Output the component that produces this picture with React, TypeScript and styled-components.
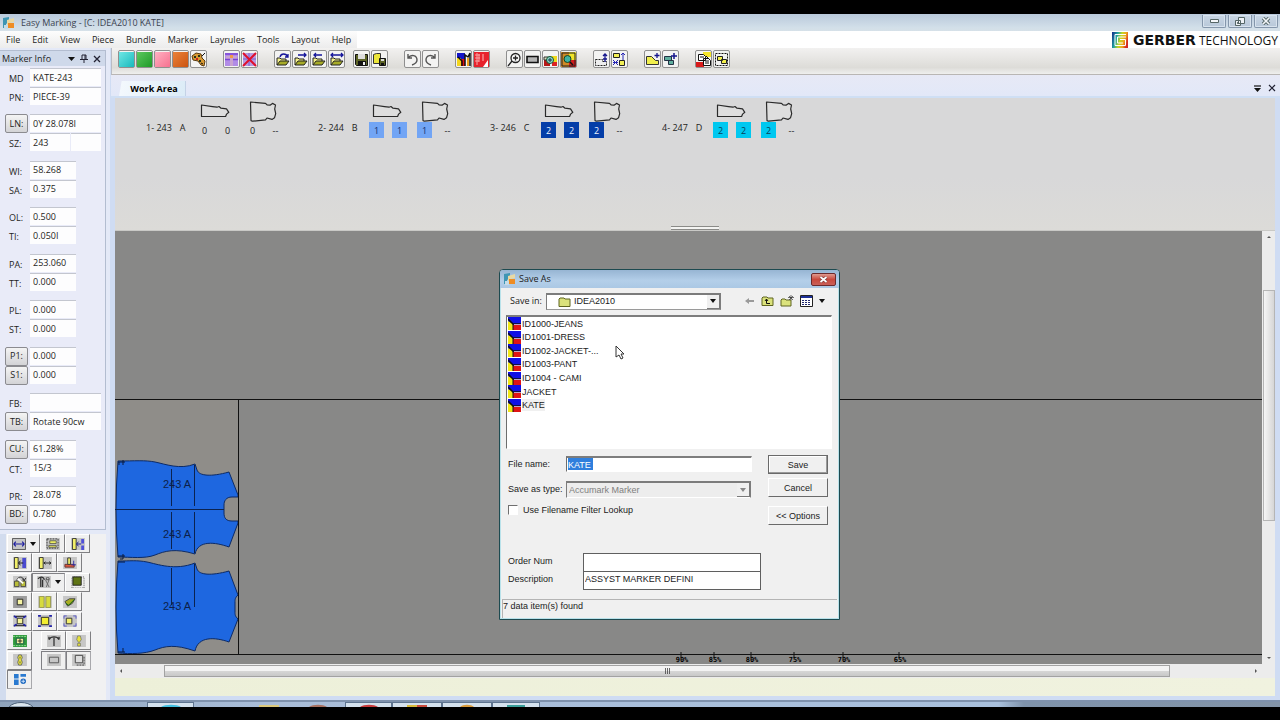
import React from "react";
import styled, { createGlobalStyle, css } from "styled-components";

const UI = '"Open Sans", "Noto Sans", sans-serif';
const CLASSIC = '"Liberation Sans", Arial, sans-serif';

const Global = createGlobalStyle`
  *, *::before, *::after { box-sizing: border-box; }
  body { margin: 0; background: #000; font: 9px/12px ${UI}; color: #1e1e22; overflow: hidden; }
  button, input, select { font: inherit; color: inherit; margin: 0; padding: 0; border-radius: 0; outline: none; }
  svg { display: block; flex: none; }
`;

/* ---------- window frame ---------- */

const Screen = styled.div`
  min-height: 100vh;
  padding: 14px 0 13px;
  display: flex;
  flex-direction: column;
  background: #000;
`;
const TitleBar = styled.header`
  height: 17px;
  display: flex;
  align-items: center;
  gap: 6px;
  padding-left: 3px;
  background: linear-gradient(#b9c9db, #d2dfe9 80%, #d6e1e8);
`;
const Title = styled.h1`
  margin: 0;
  flex: 1;
  font-size: 9px;
  font-weight: 400;
  color: #3b4350;
`;
const WindowButtons = styled.div`
  align-self: flex-start;
  display: flex;
  gap: 2px;
  padding: 1px 2px 0 0;
`;
const WindowButton = styled.button`
  width: 24px;
  height: 13px;
  display: grid;
  place-items: center;
  border: 1px solid #8496ab;
  border-top: 0;
  border-radius: 0 0 2px 2px;
  background: linear-gradient(#c9d6e4, #b8c8d9);
  box-shadow: inset 0 0 0 1px #d8e3ee;
`;
const MenuRow = styled.div`
  height: 17px;
  display: flex;
  justify-content: space-between;
  background: #fff;
`;
const Menu = styled.nav`
  display: flex;
  gap: 12px;
  padding: 0 6px;
  background: linear-gradient(#fdfdfd, #ececec);
`;
const MenuItem = styled.button`
  border: 0;
  background: none;
  line-height: 16px;
`;
const Brand = styled.div`
  display: flex;
  align-items: center;
  gap: 5px;
  padding: 1px 2px 0 0;
  font-size: 12px;
  line-height: 16px;
  color: #111;
`;
const BrandName = styled.strong`
  font: 700 14px/16px "DejaVu Sans", sans-serif;
`;
const Body = styled.div`
  flex: 1;
  display: flex;
  align-items: stretch;
  background: #cfdcf3;
`;

/* ---------- marker info ---------- */

const Sidebar = styled.aside`
  width: 110px;
  flex: none;
  display: flex;
  flex-direction: column;
  background: #e4e9f7;
`;
const InfoPanel = styled.section`
  width: 106px;
  margin-top: 2px;
  padding-bottom: 5px;
  border: solid #b3bdd0;
  border-width: 1px 1px 1px 0;
  background: #e9ebf8;
`;
const InfoHeader = styled.div`
  height: 15px;
  display: flex;
  align-items: center;
  justify-content: space-between;
  padding: 0 4px 0 2px;
  background: #cfd9ea;
`;
const InfoTitle = styled.h2`
  margin: 0;
  font-size: 9px;
  font-weight: 400;
`;
const InfoActions = styled.div`
  display: flex;
  align-items: center;
  gap: 5px;
`;
const IconButton = styled.button`
  display: grid;
  place-items: center;
  border: 0;
  background: none;
`;
const Fields = styled.div`
  height: 456px;
  margin-top: 2px;
  padding: 0 4px 0 5px;
  display: flex;
  flex-direction: column;
  justify-content: space-between;
`;
const FieldPair = styled.div`
  display: flex;
  flex-direction: column;
`;
const FieldRow = styled.div`
  height: 19px;
  display: flex;
  gap: 2px;
`;
const FieldLabel = styled.label`
  width: 23px;
  padding: 4px 0 0 4px;
  line-height: 14px;
`;
const FieldButton = styled.button`
  width: 23px;
  border: 1px solid #8b8b90;
  border-radius: 2px;
  background: linear-gradient(#f4f4f4, #d3d3d6);
  line-height: 16px;
`;
const FieldInput = styled.input<{ $w: number }>`
  width: ${(p) => p.$w}px;
  height: 18px;
  border: 0;
  border-top: 1px solid #c3c6cf;
  background: #fdfdfe;
  padding: 0 3px 1px;
  & + & { margin-left: -1px; }
`;

/* ---------- tool box ---------- */

const ToolBox = styled.div`
  flex: 1;
  width: 106px;
  margin-top: 4px;
  padding: 0 0 10px 1px;
  border-left: 6px solid #d2dcee;
  background: #f1f1f2;
`;
const ToolRows = styled.div`
  height: 155px;
  display: flex;
  flex-direction: column;
  justify-content: space-between;
`;
const ToolRow = styled.div`
  display: flex;
`;
const ToolKey = styled.button<{ $wide?: boolean; $pushed?: boolean; $offset?: boolean }>`
  width: ${(p) => (p.$wide ? 33 : 25)}px;
  height: 19px;
  margin-left: ${(p) => (p.$offset ? 9 : 0)}px;
  display: flex;
  align-items: center;
  justify-content: center;
  gap: 4px;
  border: 1px solid;
  border-color: ${(p) => (p.$pushed ? "#808084 #a8a8ac #a8a8ac #808084" : "#fff #7f7f82 #7f7f82 #fff")};
  background: #f0f0f0;
`;

/* ---------- main column ---------- */

const Main = styled.main`
  flex: 1;
  min-width: 0;
  display: flex;
  flex-direction: column;
  padding-left: 1px;
`;
const Toolbar = styled.div`
  height: 27px;
  display: flex;
  gap: 16px;
  padding: 2px 0 0 6px;
  border-bottom: 1px solid #b9b6b4;
  border-left: 1px solid #b9bcc4;
  background: linear-gradient(#f2f1f0, #dddcd8 75%, #efefee);
`;
const ToolSet = styled.div<{ $gap?: number }>`
  display: flex;
  align-items: flex-start;
  gap: ${(p) => p.$gap ?? 1}px;
`;
const ToolButton = styled.button`
  width: 17px;
  height: 18px;
  display: grid;
  place-items: center;
  border: 1px solid #8f8f8f;
  border-radius: 2px;
  background: #f3f3f2;
`;
const TabStrip = styled.div`
  height: 23px;
  display: flex;
  align-items: flex-end;
  justify-content: space-between;
  padding-right: 4px;
  border-bottom: 2px solid #cfdff4;
  background: linear-gradient(#e7e9f6, #e2e8f8);
`;
const Tab = styled.button`
  width: 75px;
  height: 15px;
  border: 0;
  border-right: 1px solid #c4d2e6;
  background: linear-gradient(100deg, transparent 10px, #f3f8fd 11px, #dcecf7);
  padding: 0 0 0 12px;
  font-weight: 700;
  line-height: 15px;
  color: #000;
`;
const TabActions = styled.div`
  display: flex;
  gap: 7px;
  padding-bottom: 4px;
`;
const Workspace = styled.div`
  flex: 1;
  display: flex;
  flex-direction: column;
  margin: 0 5px 4px 4px;
`;
const IconTray = styled.section`
  height: 133px;
  display: flex;
  flex-direction: column;
  justify-content: space-between;
  align-items: center;
  background: linear-gradient(#d8d8d9 60%, #dcdbd8);
  border-bottom: 1px solid #c9c9c6;
`;
const SizeList = styled.div`
  align-self: stretch;
  display: flex;
  padding: 3px 0 0 31px;
`;
const SizeGroup = styled.div`
  width: 172px;
  display: flex;
`;
const SizeName = styled.div`
  width: 51px;
  display: flex;
  gap: 8px;
  padding-top: 21px;
`;
const PieceColumn = styled.div<{ $w: number }>`
  width: ${(p) => p.$w}px;
`;
const PieceThumb = styled.div`
  height: 21px;
  padding-left: 3px;
`;
const CountRow = styled.div`
  display: flex;
  gap: 8px;
`;
const Count = styled.span<{ $bg: string; $fg: string }>`
  width: 15px;
  height: 16px;
  text-align: center;
  line-height: 18px;
  background: ${(p) => p.$bg};
  color: ${(p) => p.$fg};
`;
const SplitGrip = styled.div`
  width: 48px;
  height: 4px;
  border: solid #8b8b88;
  border-width: 1px 0;
  background: #f4f4f2;
`;
const CanvasRow = styled.div`
  flex: 1;
  display: flex;
`;
const Canvas = styled.section`
  position: relative;
  flex: 1;
  min-width: 0;
  background: #888887;
`;
const MarkerDrawing = styled.svg`
  position: absolute;
  inset: 0;
  width: 100%;
  height: 100%;
`;
const VScroll = styled.div`
  width: 13px;
  display: flex;
  flex-direction: column;
  align-items: center;
  padding: 4px 0;
  background: #ececec;
`;
const VThumb = styled.div`
  width: 12px;
  flex: 230;
  margin-top: 51px;
  border: 1px solid #b5b5b5;
  background: linear-gradient(90deg, #f5f5f5, #d6d6d6);
`;
const Stretch = styled.div<{ $grow: number }>`
  flex: ${(p) => p.$grow} 0 0;
`;
const HScroll = styled.div`
  height: 14px;
  display: flex;
  align-items: center;
  padding: 0 17px 0 4px;
  background: #ececec;
`;
const HThumb = styled.div`
  height: 12px;
  flex: 1004 0 0;
  margin-left: 41px;
  display: grid;
  place-items: center;
  border: 1px solid #a2a2a2;
  background: linear-gradient(#f3f3f3 45%, #d5d5d5 55%, #c8c8c8);
`;
const MessageBar = styled.div`
  height: 18px;
  background: linear-gradient(90deg, #edf0d9, #f0f2df);
`;
const TaskBar = styled.footer`
  height: 7px;
  display: flex;
  align-items: flex-end;
  border-top: 2px solid #7f92ad;
  background: linear-gradient(90deg, #8fa3bb, #a9bdd8 20%, #a9c0dc 78%, #7f93ab 80%, #8394a8);
`;
const TaskGap = styled.div<{ $w: number }>`
  width: ${(p) => p.$w}px;
`;
const TaskButton = styled.button<{ $w: number; $lit?: boolean }>`
  width: ${(p) => p.$w}px;
  height: 5px;
  display: grid;
  place-items: end center;
  border: 1px solid #5f7590;
  border-width: ${(p) => (p.$lit ? "1px 1px 0" : "0")};
  background: ${(p) => (p.$lit ? "#d5e2ee" : "transparent")};
`;

/* ---------- save dialog ---------- */

const Dialog = styled.div`
  position: absolute;
  left: 384px;
  top: 38px;
  width: 341px;
  border: 1px solid #1d4a50;
  border-radius: 4px 4px 0 0;
  box-shadow: inset 0 0 0 1px #b9e2ea;
  background: #f0f0f0;
  font: 9px/12px ${CLASSIC};
  color: #1b1b1b;
`;
const DialogTitle = styled.div`
  height: 18px;
  display: flex;
  align-items: center;
  gap: 3px;
  padding: 0 3px 0 4px;
  border-radius: 3px 3px 0 0;
  background: linear-gradient(#97b5d3, #b4cfe9 60%, #abc8e4);
  font: 9px/12px ${UI};
`;
const DialogHeading = styled.h2`
  margin: 0;
  flex: 1;
  font-size: 9px;
  font-weight: 400;
`;
const CloseButton = styled.button`
  width: 25px;
  height: 13px;
  display: grid;
  place-items: center;
  border: 1px solid #6d2a2c;
  border-radius: 2px;
  background: linear-gradient(#e09a8f, #c9483c 50%, #c96058);
`;
const DialogBody = styled.div`
  padding: 4px 7px 0 7px;
`;
const LookRow = styled.div`
  height: 18px;
  display: flex;
  align-items: center;
  padding-left: 3px;
`;
const LookLabel = styled.label`
  width: 36px;
  font: 9px/12px ${UI};
`;
const ComboShell = styled.div<{ $w: number; $off?: boolean }>`
  position: relative;
  width: ${(p) => p.$w}px;
  height: 17px;
  border: 1px solid #7c7c7c;
  border-top-width: 2px;
  border-bottom-color: ${(p) => (p.$off ? "#fff" : "#9a9a9a")};
  background: ${(p) => (p.$off ? "#ededed" : "#fff")};
  color: ${(p) => (p.$off ? "#808080" : "#1b1b1b")};
`;
const Combo = styled.select<{ $inset: number }>`
  appearance: none;
  width: 100%;
  height: 100%;
  display: block;
  padding: 0 14px 1px ${(p) => p.$inset}px;
  border: 0;
  background: none;
  opacity: 1;
  color: inherit;
`;
const ComboIcon = styled.span`
  position: absolute;
  left: 11px;
  top: 1px;
`;
const ComboArrow = styled.span`
  position: absolute;
  right: 0;
  top: 0;
  bottom: 0;
  width: 13px;
  display: grid;
  place-items: center;
  border: solid #7a7a7a;
  border-width: 0 1px 1px 0;
  background: #f0f0f0;
  pointer-events: none;
`;
const LookTools = styled.div`
  display: flex;
  align-items: center;
  gap: 6px;
  margin-left: 23px;
`;
const FileList = styled.ul`
  height: 134px;
  margin: 5px 0 0 -1px;
  padding: 0 0 0 1px;
  list-style: none;
  border: 1px solid #fff;
  border-top: 2px solid #7d7d7d;
  border-left-color: #6d6d6d;
  background: #fff;
  display: grid;
  grid-template-rows: repeat(7, 1fr) 36px;
`;
const FileItem = styled.li`
  display: flex;
  align-items: center;
  gap: 1px;
`;
const FileName = styled.span<{ $marked?: boolean }>`
  background: ${(p) => (p.$marked ? "#f0f0f0" : "transparent")};
`;
const Form = styled.div`
  display: flex;
  justify-content: space-between;
  padding: 7px 4px 0 1px;
`;
const FormFields = styled.div``;
const FormRow = styled.div<{ $h: number }>`
  height: ${(p) => p.$h}px;
  display: flex;
  align-items: flex-start;
`;
const FormLabel = styled.label<{ $w: number }>`
  width: ${(p) => p.$w}px;
  padding-top: 2px;
  white-space: nowrap;
`;
const NameInput = styled.input`
  width: 186px;
  height: 16px;
  padding: 0 1px;
  border: 1px solid #fff;
  border-top: 2px solid #7d7d7d;
  border-left-color: #6d6d6d;
  color: #fff;
  background: linear-gradient(#2f7fdd, #2f7fdd) 1px 0 / 25px 12px no-repeat #fff;
`;
const PlainBox = styled.input`
  width: 178px;
  height: 19px;
  padding: 0 1px 4px;
  border: 1px solid #5f5f5f;
  background: #fff;
`;
const Tick = styled.input`
  appearance: none;
  width: 10px;
  height: 10px;
  border: 1px solid #fff;
  border-top-color: #6f6f6f;
  border-left-color: #6f6f6f;
  background: #fff;
`;
const TickLabel = styled.label`
  padding-left: 5px;
  line-height: 11px;
`;
const FormButtons = styled.div`
  display: flex;
  flex-direction: column;
  margin-top: -1px;
`;
const PushButton = styled.button<{ $main?: boolean; $gap: number }>`
  width: 60px;
  height: 19px;
  margin-bottom: ${(p) => p.$gap}px;
  border: 1px solid;
  border-color: #fff #6a6a6a #6a6a6a #fff;
  background: #f0f0f0;
  ${(p) => p.$main && css`border-color: #6a6a6a; box-shadow: inset -1px -1px #9a9a9a, inset 1px 1px #fff;`}
`;
const Extra = styled.div`
  padding: 28px 0 0 1px;
`;
const DialogStatus = styled.div`
  height: 19px;
  margin: 9px 2px 1px;
  border: solid #b4b4b4;
  border-width: 1px 0 0 1px;
`;
const Pointer = styled.svg`
  position: absolute;
  left: 500px;
  top: 114px;
`;

/* ---------- drawings ---------- */

const Caret = ({ w = 7, c = "#111" }: { w?: number; c?: string }) => (
  <svg width={w} height={4} viewBox="0 0 8 4" preserveAspectRatio="none"><path d="M0 0h8L4 4z" fill={c} /></svg>
);
const AppLogo = ({ s }: { s: number }) => (
  <svg width={s} height={s} viewBox="0 0 12 12">
    <path d="M0 1l6-1v5L3 7v4H0z" fill="#3f96b4" />
    <path d="M4 3l7-2v4L7 6v5H4z" fill="#e9d9a4" />
    <path d="M5 6h6v5H5z" fill="#ef8d24" />
    <path d="M1 8h4v4H1z" fill="#c5dce8" />
  </svg>
);
const Folder = ({ children }: { children?: React.ReactNode }) => (
  <svg width={13} height={12} viewBox="0 0 13 12">
    <path d="M1 10.500V3l1-1h4l1 1h5v7.500z" fill="#dbe27c" stroke="#5f6420" />
    {children}
  </svg>
);
const DataIcon = () => (
  <svg width={13} height={13} viewBox="0 0 13 13">
    <path d="M0 0h13v13H0z" fill="#1010e6" />
    <path d="M0 4l5 3v6H0z" fill="#f2e816" />
    <path d="M5 8h8v5H5z" fill="#e01414" />
    <path d="M0 2l5 5h8" stroke="#111" strokeWidth="1.500" fill="none" />
    <path d="M5 7v6" stroke="#111" fill="none" />
    <path d="M6 7.500h7" stroke="#e8c8e8" strokeWidth=".8" />
  </svg>
);

const Open = ({ arrow }: { arrow: string }) => (
  <>
    <path d="M2 13V6h3l1 1h5v2" fill="#f4f08a" stroke="#222" />
    <path d="M2 13l3-4h9l-3 4z" fill="#a7ab27" stroke="#222" />
    <path d={arrow} fill="none" stroke="#15159a" strokeWidth="1.3" />
  </>
);
const Floppy = () => (
  <>
    <path d="M1.500 2.500h12v11h-11l-1-1z" fill="#5d6427" stroke="#111" />
    <path d="M4 2h7v5H4z" fill="#ddd" />
    <path d="M4 9h8v5H4z" fill="#111" />
    <path d="M9 10h2v3H9z" fill="#eee" />
  </>
);

const Swatch = ({ from, to }: { from: string; to: string }) => (
  <>
    <defs>
      <linearGradient id={"sw" + to.slice(1)} x1="0" y1="0" x2="1" y2="1">
        <stop offset="0" stopColor={from} /><stop offset="1" stopColor={to} />
      </linearGradient>
    </defs>
    <path d="M0 0h15v15H0z" fill={"url(#sw" + to.slice(1) + ")"} />
  </>
);

const art: Record<string, React.ReactNode> = {
  cyan: <Swatch from="#6fe6e4" to="#18b9bd" />,
  green: <Swatch from="#5cc85f" to="#1f9a28" />,
  pink: <Swatch from="#ffb0c2" to="#f6718f" />,
  orange: <Swatch from="#ea8239" to="#cc5410" />,
  palette: (
    <>
      <path d="M1 4l4-3 5 1 1 4 3 3-1 5-3-1-3-4-5-1z" fill="#d99a33" stroke="#5a3a10" />
      <path d="M3 4h2v2H3zM7 3h2v2H7zM8 8h2v2H8z" fill="#26341a" />
      <path d="M11 4l3-3M10 11l2 1" stroke="#111" />
      <path d="M5 6h2v2H5z" fill="#c22" />
    </>
  ),
  frame: (
    <>
      <path d="M1 1h13v13H1z" fill="#b18be6" />
      <path d="M2 4h11v3H9v7H6V7H2z" fill="#c9a3d0" />
      <path d="M1 7.500h5M9 7.500h5M1 2h13" stroke="#7a43d6" strokeWidth="1.500" />
      <path d="M6 3h3v3H6z" fill="#f09a48" />
    </>
  ),
  remove: (
    <>
      <path d="M1 1h13v13H1z" fill="#b79be0" />
      <path d="M1 7h13M7 1v13" stroke="#7a5bd0" />
      <path d="M1 1l13 13M14 1L1 14" stroke="#e0102c" strokeWidth="2" />
    </>
  ),
  open1: <Open arrow="M5 5c1-4 6-4 8 0M13 2v3h-3" />,
  open2: <Open arrow="M5 3h8M11 1l2 2-2 2" />,
  open3: <Open arrow="M3 3h8M5 1L3 3l2 2" />,
  open4: <Open arrow="M2 3h12M4 1L2 3l2 2M12 1l2 2-2 2" />,
  save: <Floppy />,
  saveAs: (
    <>
      <path d="M1.500 11.500v-9l3-1h4v10z" fill="#ece63a" stroke="#333" />
      <path d="M7.500 6.500h6v7h-6z" fill="#5d6427" stroke="#111" />
      <path d="M9 7h3v2H9z" fill="#ddd" /><path d="M9 11h3v2H9z" fill="#111" />
    </>
  ),
  undo: <path d="M3 2v4h4M3 6c3-4 9-3 9 2 0 3-2 4-5 5" fill="none" stroke="#555" strokeWidth="1.400" />,
  redo: <path d="M12 2v4H8M12 6C9 2 3 3 3 8c0 3 2 4 5 5" fill="none" stroke="#555" strokeWidth="1.400" />,
  marker: (
    <>
      <path d="M1 1h8v6H1z" fill="#1414c8" /><path d="M1 6h4v8H1z" fill="#f3d51c" />
      <path d="M5 7h4v7H5z" fill="#d11" /><path d="M2 5l4 4v5M9 14V3l3 2 2-4v13" fill="none" stroke="#111" strokeWidth="1.500" />
      <path d="M11 6h2v8h-2z" fill="#efa21c" />
    </>
  ),
  flawed: (
    <>
      <path d="M0 0h15v15H0z" fill="#e8222c" />
      <path d="M1 3h5M1 6h5M1 9h4M3 1v12M5 2v8" stroke="#f6a6a6" />
      <path d="M9 15l5-7v7z" fill="#fff" /><path d="M9 2v7" stroke="#fbb" />
    </>
  ),
  zoomIn: (
    <>
      <circle cx="8.500" cy="6" r="4.500" fill="#f6f6f6" stroke="#222" strokeWidth="1.300" />
      <path d="M6 6h5M8.500 3.500v5M5 9l-4 5" stroke="#222" strokeWidth="1.300" />
    </>
  ),
  rect: <path d="M2 4.500h11v6H2z" fill="#b4b4b4" stroke="#111" strokeWidth="1.600" />,
  zoomPart: (
    <>
      <path d="M1 7h6v7H1z" fill="#b51818" /><path d="M8 4h6v6H8z" fill="#efd91c" /><path d="M9 10h5v4H9z" fill="#d22" />
      <path d="M1 5h7v3H1z" fill="#ddb" stroke="#333" /><circle cx="7" cy="8" r="3.500" fill="#8fd8cc" stroke="#153" />
      <path d="M5 8h4M7 6v4" stroke="#134" />
    </>
  ),
  zoomAll: (
    <>
      <path d="M0 0h8v15H0z" fill="#d18a25" /><path d="M8 0h7v8H8z" fill="#f0e428" /><path d="M8 8h7v7H8z" fill="#d01c1c" />
      <path d="M1 1h13v13H1z" fill="none" stroke="#222" /><circle cx="6.500" cy="7" r="3.500" fill="#3fb2a2" stroke="#142" />
      <path d="M9 10l3 3" stroke="#111" strokeWidth="1.500" />
    </>
  ),
  lift: (
    <>
      <path d="M1.500 7.500h7v2h4v4h-11z" fill="#eee" stroke="#222" strokeDasharray="2 1" />
      <path d="M11 2v8M9 4l2-2 2 2M9 7h4" stroke="#16168c" strokeWidth="1.300" fill="none" />
    </>
  ),
  scatter: (
    <>
      <path d="M1.500 1.500h6v4h-6zM7.500 8.500h5v5h-5z" fill="#f1ee55" stroke="#222" />
      <path d="M11 1v7M9 3l2-2 2 2M1 8l5 5M6 8l-5 5M1 10.500h5" stroke="#2626b4" fill="none" />
    </>
  ),
  addPiece: (
    <>
      <path d="M1.500 12.500v-8h5l4 4h3v4z" fill="#f0ee4c" stroke="#333" />
      <path d="M12 1v5M9.500 3.500h5" stroke="#15158c" strokeWidth="1.300" />
    </>
  ),
  addCopy: (
    <>
      <path d="M1.500 4.500h7v4h-7zM5.500 8.500h5v4h-5z" fill="#5fae9e" stroke="#234" />
      <path d="M11 1v6M8 4h6" stroke="#15158c" strokeWidth="1.500" />
    </>
  ),
  report: (
    <>
      <path d="M7 0h8v5H7z" fill="#f5e52a" /><path d="M0 10h8v5H0z" fill="#d81b1b" />
      <path d="M2.500 2.500h5l2 2v4h-7zM7.500 6.500h5l2 2v5h-7z" fill="#fff" stroke="#111" />
      <path d="M4 5h4M9 9h4M9 11h4M10 4l3 3" stroke="#111" />
    </>
  ),
  group: (
    <>
      <path d="M1.500 1.500h12v12h-12z" fill="none" stroke="#111" strokeDasharray="2 1" />
      <path d="M3.500 4.500h5v4h-5zM7.500 7.500h5v4h-5z" fill="#f1ee4a" stroke="#222" />
    </>
  ),
};

const G = <path d="M0 0h15v13H0z" fill="#c6c6c6" />;
const boxArt: Record<string, React.ReactNode> = {
  span: <>{G}<path d="M.5.5h14v12H.5z" fill="none" stroke="#555" /><path d="M2 6.500h11M4 4L2 6.500 4 9M11 4l2 2.500L11 9" stroke="#1d1da0" fill="none" strokeWidth="1.300" /></>,
  swap: <>{G}<path d="M1 1h12v10H1z" fill="none" stroke="#333" strokeDasharray="2 1" /><path d="M4 3h7v3H4zM3 8h8v2H3z" fill="#ecec62" stroke="#333" strokeWidth=".7" /></>,
  left: <>{G}<path d="M1.500.5h4v12h-4z" fill="#f2f06a" stroke="#333" /><path d="M6 6.500h5M8 4L6 6.500 8 9" stroke="#171789" fill="none" /><path d="M11 1h3v5h-3zM11 8h3v5h-3z" fill="#5050d8" /></>,
  left2: <>{G}<path d="M1.500.5h4v12h-4z" fill="#f2f06a" stroke="#333" /><path d="M10 1h4v11h-4z" fill="#4a4ad0" /><path d="M6 6.500h5M8 4L6 6.500 8 9" stroke="#111" fill="none" /></>,
  gapH: <>{G}<path d="M1.500.5h4v12h-4z" fill="#f2f06a" stroke="#333" /><path d="M6 6.500h8M8 5L6.500 6.500 8 8M12 5l2 1.500L12 8" stroke="#222" fill="none" /></>,
  stack: <>{G}<path d="M2 8h10v3H2z" fill="#e05a3c" stroke="#633" /><path d="M5 1h3v7H5z" fill="#f0ee66" stroke="#333" /><path d="M11.500 4v5M9 8.500h5" stroke="#2a2aa8" /></>,
  rotate: <>{G}<path d="M1.500 5.500h5v6h-5zM8.500 5.500h5v6h-5z" fill="#b9bd3a" stroke="#444" /><path d="M4 5c1-5 7-5 8 0M10 3l2 2 2-3" stroke="#222" fill="none" /><path d="M5 3l6 5" stroke="#fff" strokeWidth="2" /></>,
  flip: <>{G}<path d="M1 3c3-3 6-2 7 1M4 2v10M6 4v8" stroke="#333" fill="none" strokeWidth="1.400" /><path d="M9 4l4 8M13 4l-3 8" stroke="#666" /><path d="M10 2h3v2h-3z" fill="#fff" stroke="#444" /></>,
  shade: <><path d="M1 1h13v12H1z" fill="none" stroke="#555" strokeDasharray="1 1" /><path d="M2 1h9v9H2z" fill="#5f7414" stroke="#222" /></>,
  center: <><path d="M0 0h15v13H0z" fill="#9c9c9c" /><path d="M4.500 3.500h6v6h-6z" fill="#f6f4a4" stroke="#222" /></>,
  twin: <>{G}<path d="M1.500.5h5v12h-5zM8.500.5h5v12h-5z" fill="#d7db3e" stroke="#999a50" /></>,
  fold: <>{G}<path d="M2 6l5-3h6l-3 5-5 3z" fill="#a9ad22" stroke="#444" /><path d="M3 8l3 2 6-6" stroke="#161" fill="none" /></>,
  pack1: <>{G}<path d="M1 1l3 2M14 1l-3 2M1 12l3-2M14 12l-3-2" stroke="#22a" strokeWidth="2" /><path d="M4.500 3.500h6v6h-6z" fill="#f6f49a" stroke="#222" /><path d="M3 1.500h9M3 11.500h9" stroke="#222" /></>,
  pack2: <>{G}<path d="M0 1h3M12 1h3M0 12h3M12 12h3" stroke="#22a" strokeWidth="2" /><path d="M3.500 2.500h8v8h-8z" fill="#f2ee30" stroke="#222" /></>,
  pack3: <>{G}<path d="M1 1h3M11 1h3M1 12h3M11 12h3M1 1v3M14 1v3M1 9v3M14 9v3" stroke="#55c" /><path d="M3.500 3.500h6v6h-6z" fill="#f2ee6a" stroke="#333" /></>,
  band: <><path d="M0 0h15v13H0z" fill="#2f9a3c" /><path d="M3.500 3.500h8v6h-8z" fill="#f4f2a0" stroke="#154" /><path d="M7.500 4v5M5 6.500h5" stroke="#222" /><path d="M0 1.500h15M0 11.500h15" stroke="#9de09c" strokeDasharray="2 1" /></>,
  arc: <>{G}<path d="M2 5c2-4 9-4 11 0M2 5V2M13 5V2M7.500 3v9" stroke="#333" fill="none" strokeWidth="1.400" /></>,
  drop: <>{G}<path d="M6 1h3l1 4-2 3H7L5 5zM6 9h3v3H6z" fill="#e6e23a" stroke="#666" strokeWidth=".7" /></>,
  eight: <>{G}<path d="M6 1h3l1 3-1 2 1 3-1 3H6L5 9l1-3-1-2z" fill="#e6e23a" stroke="#555" strokeWidth=".8" /><path d="M7 3h1v2H7zM7 8h1v2H7z" fill="#555" /></>,
  sheet: <>{G}<path d="M2.500 3.500h10v6h-10z" fill="none" stroke="#555" /></>,
  sheets: <>{G}<path d="M3.500 1.500h8v8h-8z" fill="#ddd" stroke="#444" /><path d="M13 3v9H5" stroke="#444" fill="none" strokeDasharray="2 1" /></>,
  panels: <><path d="M1 1h5v5H1zM1 7h5v6H1zM8 1h6v3H8z" fill="#2a7ad0" /><circle cx="11" cy="9" r="3" fill="#1d68c0" /><path d="M9 9h4M11 7v4" stroke="#cfe4fa" /></>,
};

const Art = ({ name }: { name: string }) => <svg width={15} height={15} viewBox="0 0 15 15">{art[name]}</svg>;
const BoxArt = ({ name }: { name: string }) => <svg width={14} height={12} viewBox="0 0 15 13">{boxArt[name]}</svg>;

const Sleeve = () => (
  <svg width={30} height={18} viewBox="0 0 30 18">
    <path d="M1.500 15.500V4l11 1.600 4.500.6 2-.7 2 1.700 5.500.6 2.300 3.500-2.200 1.800-1 2.400z" fill="#dedede" stroke="#2a2a2a" strokeWidth="1.200" strokeLinejoin="round" />
  </svg>
);
const Bodice = () => (
  <svg width={30} height={21} viewBox="0 0 30 21">
    <path d="M2.500 1l15 1.400 1.500 1.400 3 .4 2.500-1.800 3 1.600-.8 4 1 4.600-1.200 4.200-2.500 1.600-5-1.400-1.500 1.900-13 1.300-1.500-.6z" fill="#dedede" stroke="#2a2a2a" strokeWidth="1.200" strokeLinejoin="round" />
  </svg>
);

/* ---------- data ---------- */

type Field = { label: string; value: string; w: number; button?: boolean; extra?: boolean };
const W = 71;
const N = 46;
const fieldPairs: Field[][] = [
  [{ label: "MD", value: "KATE-243", w: W }, { label: "PN:", value: "PIECE-39", w: W }],
  [{ label: "LN:", value: "0Y 28.078I", w: W, button: true }, { label: "SZ:", value: "243", w: 40, extra: true }],
  [{ label: "WI:", value: "58.268", w: N }, { label: "SA:", value: "0.375", w: N }],
  [{ label: "OL:", value: "0.500", w: N }, { label: "TI:", value: "0.050I", w: N }],
  [{ label: "PA:", value: "253.060", w: N }, { label: "TT:", value: "0.000", w: N }],
  [{ label: "PL:", value: "0.000", w: N }, { label: "ST:", value: "0.000", w: N }],
  [{ label: "P1:", value: "0.000", w: N, button: true }, { label: "S1:", value: "0.000", w: N, button: true }],
  [{ label: "FB:", value: "", w: W }, { label: "TB:", value: "Rotate 90cw", w: W, button: true }],
  [{ label: "CU:", value: "61.28%", w: N, button: true }, { label: "CT:", value: "15/3", w: N }],
  [{ label: "PR:", value: "28.078", w: N }, { label: "BD:", value: "0.780", w: N, button: true }],
];

type Key = { n: string; wide?: boolean; pushed?: boolean; offset?: boolean };
const toolKeys: Key[][] = [
  [{ n: "span", wide: true }, { n: "swap" }, { n: "left" }],
  [{ n: "left2" }, { n: "gapH" }, { n: "stack" }],
  [{ n: "rotate" }, { n: "flip", wide: true, pushed: true }, { n: "shade" }],
  [{ n: "center" }, { n: "twin" }, { n: "fold" }],
  [{ n: "pack1" }, { n: "pack2" }, { n: "pack3" }],
  [{ n: "band" }, { n: "arc", offset: true }, { n: "drop" }],
  [{ n: "eight" }, { n: "sheet", offset: true, pushed: true }, { n: "sheets", pushed: true }],
  [{ n: "panels", pushed: true }],
];

const toolSets = [
  [["cyan", "green", "pink", "orange", "palette"]],
  [["frame", "remove"]],
  [["open1", "open2", "open3", "open4"], ["save", "saveAs"]],
  [["undo", "redo"]],
  [["marker", "flawed"]],
  [["zoomIn", "rect", "zoomPart", "zoomAll"]],
  [["lift", "scatter"]],
  [["addPiece", "addCopy"]],
  [["report", "group"]],
];

const sizes = [
  { name: "1- 243", code: "A", n: 0, bg: "transparent", fg: "#222" },
  { name: "2- 244", code: "B", n: 1, bg: "#72a5f5", fg: "#10306c" },
  { name: "3- 246", code: "C", n: 2, bg: "#053ea8", fg: "#eef3ff" },
  { name: "4- 247", code: "D", n: 2, bg: "#00c8f0", fg: "#0a3f58" },
];

const ticks: [number, string][] = [[567, "90%"], [600, "85%"], [637, "80%"], [680, "75%"], [729, "70%"], [785, "65%"]];
const files = ["ID1000-JEANS", "ID1001-DRESS", "ID1002-JACKET-...", "ID1003-PANT", "ID1004 - CAMI", "JACKET", "KATE"];

/* ---------- parts ---------- */

const MarkerInfo = () => (
  <InfoPanel>
    <InfoHeader>
      <InfoTitle>Marker Info</InfoTitle>
      <InfoActions>
        <IconButton aria-label="Panel menu"><Caret /></IconButton>
        <IconButton aria-label="Pin">
          <svg width={8} height={9} viewBox="0 0 8 9"><path d="M2 5V1h4v4M5 1v4M0 5.500h8M4 6v3" fill="none" stroke="#223" /></svg>
        </IconButton>
        <IconButton aria-label="Close panel">
          <svg width={8} height={8} viewBox="0 0 8 8"><path d="M1 1l6 6M7 1L1 7" stroke="#223" strokeWidth="1.300" /></svg>
        </IconButton>
      </InfoActions>
    </InfoHeader>
    <Fields>
      {fieldPairs.map((pair) => (
        <FieldPair key={pair[0].label}>
          {pair.map((f) => (
            <FieldRow key={f.label}>
              {f.button ? <FieldButton>{f.label}</FieldButton> : <FieldLabel htmlFor={f.label}>{f.label}</FieldLabel>}
              <FieldInput id={f.label} aria-label={f.label} $w={f.w} defaultValue={f.value} />
              {f.extra && <FieldInput aria-label="Size suffix" $w={30} />}
            </FieldRow>
          ))}
        </FieldPair>
      ))}
    </Fields>
  </InfoPanel>
);

const SaveDialog = () => (
  <Dialog role="dialog" aria-label="Save As">
    <DialogTitle>
      <AppLogo s={12} />
      <DialogHeading>Save As</DialogHeading>
      <CloseButton aria-label="Close">
        <svg width={9} height={7} viewBox="0 0 9 7"><path d="M1.500 1l6 5M7.500 1l-6 5" stroke="#733" strokeWidth="3" /><path d="M1.500 1l6 5M7.500 1l-6 5" stroke="#fff" strokeWidth="1.800" /></svg>
      </CloseButton>
    </DialogTitle>
    <DialogBody>
      <LookRow>
        <LookLabel htmlFor="look">Save in:</LookLabel>
        <ComboShell $w={175}>
          <ComboIcon><Folder /></ComboIcon>
          <Combo id="look" $inset={27}><option>IDEA2010</option></Combo>
          <ComboArrow><Caret w={6} /></ComboArrow>
        </ComboShell>
        <LookTools>
          <IconButton aria-label="Back">
            <svg width={11} height={8} viewBox="0 0 11 8"><path d="M1 4l4-3v2h5v2H5v2z" fill="#9a9a9a" /></svg>
          </IconButton>
          <IconButton aria-label="Up one level"><Folder><path d="M4 6l1.500-2L7 6M5.500 4v4.500H9" stroke="#111" fill="none" /></Folder></IconButton>
          <IconButton aria-label="New folder">
            <svg width={14} height={12} viewBox="0 0 14 12"><path d="M1 11V5l1-1h3l1 1h5v6z" fill="#dbe27c" stroke="#5f6420" /><path d="M11 0v5M8 2.500h6M9 1l4 4M13 1L9 5" stroke="#333" strokeWidth=".7" /></svg>
          </IconButton>
          <IconButton aria-label="View">
            <svg width={13} height={12} viewBox="0 0 13 12"><path d="M.5.5h12v11H.5z" fill="#fff" stroke="#222" /><path d="M1 1h11v2H1z" fill="#1c2f98" /><path d="M2 5.500h9M2 7.500h9M2 9.500h9" stroke="#222a70" strokeDasharray="2 1" /></svg>
          </IconButton>
          <Caret w={6} />
        </LookTools>
      </LookRow>
      <FileList>
        {files.map((f) => (
          <FileItem key={f}><DataIcon /><FileName $marked={f === "KATE"}>{f}</FileName></FileItem>
        ))}
      </FileList>
      <Form>
        <FormFields>
          <FormRow $h={25}>
            <FormLabel $w={58} htmlFor="fname">File name:</FormLabel>
            <NameInput id="fname" defaultValue="KATE" />
          </FormRow>
          <FormRow $h={24}>
            <FormLabel $w={58} htmlFor="ftype">Save as type:</FormLabel>
            <ComboShell $w={185} $off>
              <Combo id="ftype" $inset={2} disabled><option>Accumark Marker</option></Combo>
              <ComboArrow><Caret w={6} c="#888" /></ComboArrow>
            </ComboShell>
          </FormRow>
          <FormRow $h={18}>
            <Tick id="lookup" type="checkbox" />
            <TickLabel htmlFor="lookup">Use Filename Filter Lookup</TickLabel>
          </FormRow>
        </FormFields>
        <FormButtons>
          <PushButton $main $gap={4}>Save</PushButton>
          <PushButton $gap={9}>Cancel</PushButton>
          <PushButton $gap={0}>&lt;&lt; Options</PushButton>
        </FormButtons>
      </Form>
      <Extra>
        <FormRow $h={18}>
          <FormLabel $w={75} htmlFor="order">Order Num</FormLabel>
          <PlainBox id="order" />
        </FormRow>
        <FormRow $h={19}>
          <FormLabel $w={75} htmlFor="desc">Description</FormLabel>
          <PlainBox id="desc" defaultValue="ASSYST MARKER DEFINI" />
        </FormRow>
      </Extra>
    </DialogBody>
    <DialogStatus>7 data item(s) found</DialogStatus>
  </Dialog>
);

const Drawing = () => (
  <MarkerDrawing aria-label="Marker layout">
    <rect x="0" y="169" width="123" height="254" fill="#8f8d89" />
    <g fill="#1e67e0" stroke="#0d2b66">
      <path d="M3 230C20 230 30 229 40 231S65 239 80 233L82 239C84 245 96 246 114 241L123 264V266H117C111 266 109 270 109 274V282C109 287 111 290 117 290H123V292L114 316C100 311 83 309 80 323C60 317 50 320 40 324S15 326 3 326Q-1 278 3 230z" />
      <path d="M3 330C15 330 22 329 32 331S60 340 80 332L82 338C84 344 96 345 114 340L123 364C120 367 120 368 120 372V380C120 384 120 385 123 388L114 411C100 406 83 405 80 420C60 413 50 415 40 419S15 423 3 422Q-1 376 3 330z" />
    </g>
    <path d="M0 278.500H109M56.500 238V275M56.500 281V318M79.500 234V275M79.500 281V322M56.500 337V374M79.500 333V376" stroke="#0b2350" fill="none" />
    <path d="M3 231h7M8 229v5M3 325h7M8 323v5M3 331h7M3 421h7M8 417v4M4 231v3M5 328h3" stroke="#0b1a3c" fill="none" />
    <g fill="#0c1f4a" fontFamily="Liberation Sans, sans-serif" fontSize="11">
      <text x="48" y="257">243 A</text>
      <text x="48" y="307">243 A</text>
      <text x="48" y="379">243 A</text>
    </g>
    <line x1="0" x2="100%" y1="168.500" y2="168.500" stroke="#111" />
    <line x1="0" x2="100%" y1="423.500" y2="423.500" stroke="#111" />
    <line x1="123.500" x2="123.500" y1="168" y2="423" stroke="#111" />
    {ticks.map(([x, t]) => (
      <g key={t}>
        <line x1={x - 1} x2={x - 1} y1="421" y2="427" stroke="#111" />
        <text x={x} y="431" textAnchor="middle" fontFamily="DejaVu Sans Mono, monospace" fontWeight="700" fontSize="7" fill="#000">{t}</text>
      </g>
    ))}
  </MarkerDrawing>
);

export default function App() {
  return (
    <>
      <Global />
      <Screen>
        <TitleBar>
          <AppLogo s={12} />
          <Title>Easy Marking - [C: IDEA2010 KATE]</Title>
          <WindowButtons>
            <WindowButton aria-label="Minimize"><svg width={9} height={4} viewBox="0 0 9 4"><path d="M.5.5h8v3h-8z" fill="#f4f7fa" stroke="#566" /></svg></WindowButton>
            <WindowButton aria-label="Restore"><svg width={10} height={9} viewBox="0 0 10 9"><path d="M3.500.5h6v6h-6zM.5 3.500h5v5h-5z" fill="#eef2f6" stroke="#566" /><path d="M2.500 5.500h1v1h-1z" stroke="#566" /></svg></WindowButton>
            <WindowButton aria-label="Close"><svg width={10} height={8} viewBox="0 0 10 8"><path d="M2 1l6 6M8 1L2 7" stroke="#566" strokeWidth="3.400" /><path d="M2 1l6 6M8 1L2 7" stroke="#f4f7fa" strokeWidth="1.600" /></svg></WindowButton>
          </WindowButtons>
        </TitleBar>
        <MenuRow>
          <Menu>
            {["File", "Edit", "View", "Piece", "Bundle", "Marker", "Layrules", "Tools", "Layout", "Help"].map((m) => (
              <MenuItem key={m}>{m}</MenuItem>
            ))}
          </Menu>
          <Brand>
            <svg width={16} height={16} viewBox="0 0 16 16">
              <defs>
                <linearGradient id="brand" x1="0" y1="0.200" x2="1" y2="0.500">
                  <stop offset="0" stopColor="#173a8f" /><stop offset=".3" stopColor="#1fa5a0" /><stop offset=".55" stopColor="#c8d820" /><stop offset=".8" stopColor="#f0a01c" /><stop offset="1" stopColor="#d42a24" />
                </linearGradient>
              </defs>
              <path d="M0 0h16v16H0z" fill="url(#brand)" />
              <path d="M14 2.500H3v11h10.500V7.500H8M14 5H5.500v6h5.500" fill="none" stroke="#fff" strokeWidth="1" />
            </svg>
            <span><BrandName>GERBER</BrandName> TECHNOLOGY</span>
          </Brand>
        </MenuRow>
        <Body>
          <Sidebar>
            <MarkerInfo />
            <ToolBox>
              <ToolRows>
                {toolKeys.map((row) => (
                  <ToolRow key={row[0].n}>
                    {row.map((k) => (
                      <ToolKey key={k.n} aria-label={k.n} $wide={k.wide} $pushed={k.pushed} $offset={k.offset}>
                        <BoxArt name={k.n} />
                        {k.wide && <Caret w={6} />}
                      </ToolKey>
                    ))}
                  </ToolRow>
                ))}
              </ToolRows>
            </ToolBox>
          </Sidebar>
          <Main>
            <Toolbar>
              {toolSets.map((sets) => (
                <ToolSet key={sets[0][0]} $gap={8}>
                  {sets.map((names) => (
                    <ToolSet key={names[0]}>
                      {names.map((n) => <ToolButton key={n} aria-label={n}><Art name={n} /></ToolButton>)}
                    </ToolSet>
                  ))}
                </ToolSet>
              ))}
            </Toolbar>
            <TabStrip>
              <Tab>Work Area</Tab>
              <TabActions>
                <IconButton aria-label="Window list"><svg width={7} height={7} viewBox="0 0 7 7"><path d="M0 1h7" stroke="#111" strokeWidth="1.200" /><path d="M0 3h7L3.500 7z" fill="#111" /></svg></IconButton>
                <IconButton aria-label="Close tab"><svg width={8} height={8} viewBox="0 0 8 8"><path d="M1 1l6 6M7 1L1 7" stroke="#223" strokeWidth="1.200" /></svg></IconButton>
              </TabActions>
            </TabStrip>
            <Workspace>
              <IconTray>
                <SizeList>
                  {sizes.map((s) => (
                    <SizeGroup key={s.code}>
                      <SizeName><span>{s.name}</span><span>{s.code}</span></SizeName>
                      <PieceColumn $w={48}>
                        <PieceThumb><Sleeve /></PieceThumb>
                        <CountRow><Count $bg={s.bg} $fg={s.fg}>{s.n}</Count><Count $bg={s.bg} $fg={s.fg}>{s.n}</Count></CountRow>
                      </PieceColumn>
                      <PieceColumn $w={48}>
                        <PieceThumb><Bodice /></PieceThumb>
                        <CountRow><Count $bg={s.bg} $fg={s.fg}>{s.n}</Count><Count $bg="transparent" $fg="#222">--</Count></CountRow>
                      </PieceColumn>
                    </SizeGroup>
                  ))}
                </SizeList>
                <SplitGrip />
              </IconTray>
              <CanvasRow>
                <Canvas>
                  <Drawing />
                  <SaveDialog />
                  <Pointer width={10} height={15} viewBox="0 0 10 15"><path d="M1 1v11l3-2 2 4 2-1-2-4h3z" fill="#fff" stroke="#333" /></Pointer>
                </Canvas>
                <VScroll>
                  <svg width={6} height={4} viewBox="0 0 6 4"><path d="M1 3h4L3 1z" fill="#555" /></svg>
                  <VThumb />
                  <Stretch $grow={136} />
                  <svg width={6} height={4} viewBox="0 0 6 4"><path d="M1 1h4L3 3z" fill="#555" /></svg>
                </VScroll>
              </CanvasRow>
              <HScroll>
                <svg width={4} height={6} viewBox="0 0 4 6"><path d="M3 1v4L1 3z" fill="#555" /></svg>
                <HThumb><svg width={7} height={6} viewBox="0 0 7 6"><path d="M1.500 0v6M3.500 0v6M5.500 0v6" stroke="#444" strokeWidth=".8" /></svg></HThumb>
                <Stretch $grow={84} />
                <svg width={4} height={6} viewBox="0 0 4 6"><path d="M1 1v4l2-2z" fill="#555" /></svg>
              </HScroll>
              <MessageBar />
            </Workspace>
          </Main>
        </Body>
        <TaskBar>
          <TaskGap $w={9} />
          <TaskButton aria-label="Start" $w={24}><svg width={24} height={5} viewBox="0 0 24 5"><path d="M0 5C5-1 19-1 24 5z" fill="#dbe6ee" stroke="#4c6078" /></svg></TaskButton>
          <TaskGap $w={114} />
          <TaskButton aria-label="Browser" $w={47} $lit><svg width={20} height={3} viewBox="0 0 20 3"><path d="M0 3C4 0 16 0 20 3z" fill="#42bfe0" /></svg></TaskButton>
          <TaskGap $w={64} />
          <TaskButton aria-label="Explorer" $w={22}><svg width={20} height={3} viewBox="0 0 20 3"><path d="M0 3V1h20v2z" fill="#dcc87a" /></svg></TaskButton>
          <TaskGap $w={28} />
          <TaskButton aria-label="Player" $w={20}><svg width={18} height={3} viewBox="0 0 18 3"><path d="M0 3C4 0 14 0 18 3z" fill="#a8705f" /></svg></TaskButton>
          <TaskGap $w={17} />
          <TaskButton aria-label="Recorder" $w={47} $lit><svg width={18} height={3} viewBox="0 0 18 3"><path d="M0 3C4 0 14 0 18 3z" fill="#c8393a" /></svg></TaskButton>
          <TaskButton aria-label="Marker" $w={50} $lit><svg width={20} height={3} viewBox="0 0 20 3"><path d="M0 3V1h10v2z" fill="#d9bb3a" /><path d="M10 3V1h10v2z" fill="#c8483a" /></svg></TaskButton>
          <TaskButton aria-label="Viewer" $w={50} $lit><svg width={14} height={3} viewBox="0 0 14 3"><path d="M0 3C3 0 11 0 14 3z" fill="#d99a3a" /></svg></TaskButton>
          <TaskButton aria-label="Easy Marking" $w={48} $lit><svg width={18} height={3} viewBox="0 0 18 3"><path d="M0 3V1h18v2z" fill="#3a9f9a" /></svg></TaskButton>
        </TaskBar>
      </Screen>
    </>
  );
}
